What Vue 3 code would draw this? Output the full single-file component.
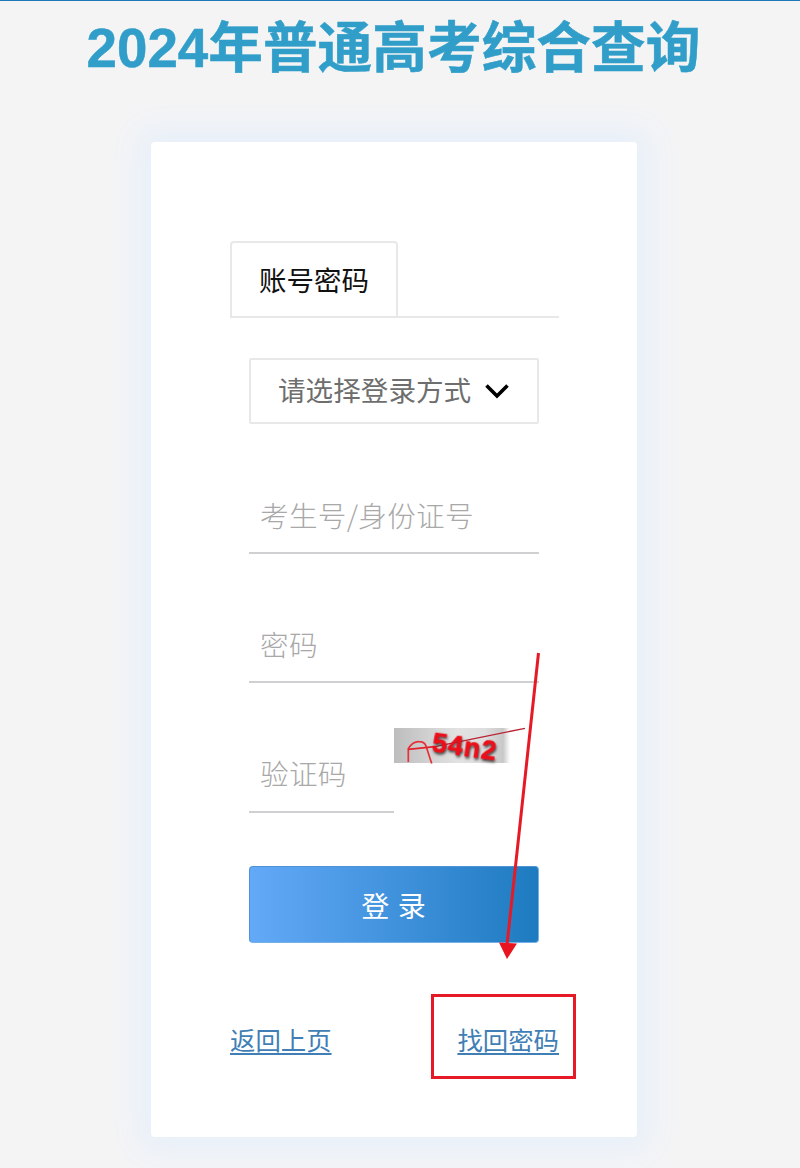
<script setup>
const fields = [
  { label: '考生号/身份证号', cls: 'first' },
  { label: '密码', cls: 'second' }
]
</script>

<template>
  <div class="page">
    <h1 class="title">2024年普通高考综合查询</h1>
    <main class="card">
      <div class="tabs"><div class="tab">账号密码</div></div>
      <div class="form">
        <div class="select">
          <span class="select-text">请选择登录方式</span>
          <svg class="chev" width="26" height="16" viewBox="0 0 26 16" aria-hidden="true">
            <path d="M2.5 2.5 L13 13 L23.5 2.5" fill="none" stroke="#000" stroke-width="3.6" />
          </svg>
        </div>
        <div v-for="f in fields" :key="f.label" class="field" :class="f.cls">{{ f.label }}</div>
        <div class="captcha-row">
          <div class="field code">验证码</div>
          <div class="captcha">
            <svg class="captcha-lines" width="132" height="36" viewBox="0 0 132 36" aria-hidden="true">
              <path d="M14.3 34 L14.3 20.5 C18 15 22 13.5 25 13.7 C29 13.8 31 15 32 18 L37.7 35.5" fill="none" stroke="#e6313a" stroke-width="1.7" />
              <path d="M14.3 21.3 L41 18.7" fill="none" stroke="#e3222b" stroke-width="1.7" />
              <path d="M41 18.7 L131 0.3" fill="none" stroke="#b92333" stroke-width="1.3" />
            </svg>
            <span class="captcha-text">54n2</span>
          </div>
        </div>
        <button class="login" type="button">登 录</button>
      </div>
      <div class="links">
        <a class="link">返回上页</a>
        <a class="link">找回密码</a>
      </div>
    </main>
    <div class="mark-box"></div>
    <svg class="mark-arrow" width="60" height="320" viewBox="0 0 60 320" aria-hidden="true">
      <path d="M43.5 1 L12 293" fill="none" stroke="#e51a26" stroke-width="3" />
      <path d="M4 290.5 L22 291.5 L12 307 Z" fill="#e8141f" />
    </svg>
  </div>
</template>

<style>
html, body { margin: 0; background: #f4f4f5; }
</style>

<style scoped>
.page {
  position: relative;
  width: 800px;
  height: 1168px;
  box-sizing: border-box;
  overflow: hidden;
  background: #f4f4f5;
  border-top: 1px solid #1d78b8;
  font-family: "Liberation Sans", "Noto Sans CJK SC", sans-serif;
}
.title {
  margin: 0;
  height: 141px;
  padding-top: 12px;
  padding-right: 13px;
  box-sizing: border-box;
  text-align: center;
  font-size: 54.7px;
  line-height: 70px;
  font-weight: 700;
  color: #319ec9;
  -webkit-text-stroke: 0.5px #319ec9;
}
.card {
  width: 486px;
  height: 995px;
  margin-left: 151px;
  box-sizing: border-box;
  padding: 99px 79px 0;
  background: #fff;
  border-radius: 4px;
  box-shadow: 0 0 30px 14px #e8f0fa;
}
.tabs {
  display: flex;
  width: 329px;
  height: 77px;
  box-sizing: border-box;
  border-bottom: 2px solid #e8e8e8;
}
.tab {
  width: 168px;
  height: 77px;
  box-sizing: border-box;
  border: 2px solid #e8e8e8;
  border-radius: 4px 4px 0 0;
  text-align: center;
  font-size: 27.5px;
  line-height: 78px;
  color: #111;
}
.form {
  width: 290px;
  margin-left: 19px;
}
.select {
  height: 66px;
  margin-top: 40px;
  box-sizing: border-box;
  display: flex;
  align-items: center;
  gap: 13px;
  padding-left: 27px;
  border: 2px solid #e8e8e8;
  border-radius: 2px;
  font-size: 27.6px;
  color: #6e6e6e;
}
.select-text { padding-bottom: 4px; }
.chev { flex: none; }
.field {
  box-sizing: border-box;
  padding-left: 11px;
  border-bottom: 2px solid #d0d0d2;
  font-size: 28.6px;
  letter-spacing: 0.3px;
  color: #a8a8a8;
  font-family: "Noto Sans CJK SC", sans-serif;
  font-weight: 300;
}
.field.first { height: 67px; margin-top: 63px; line-height: 56px; }
.field.second { height: 65px; margin-top: 64px; line-height: 52px; }
.captcha-row {
  display: flex;
  align-items: flex-start;
}
.field.code {
  width: 145px;
  height: 67px;
  margin-top: 63px;
  line-height: 54px;
}
.captcha {
  position: relative;
  width: 116px;
  height: 35px;
  margin-top: 45px;
  background: linear-gradient(90deg, #bdbdbd, #e2e2e2 55%, #dedede 78%, #c8c8c8 94%, #fff 100%);
}
.captcha-lines {
  position: absolute;
  left: 0;
  top: 0;
  overflow: visible;
}
.captcha-text {
  position: absolute;
  left: 38px;
  top: 4px;
  font-size: 27px;
  line-height: 30px;
  font-weight: 700;
  letter-spacing: 1px;
  color: #ec0f1a;
  -webkit-text-stroke: 0.6px #ec0f1a;
  text-shadow: 1px 2px 3px #333;
  transform: rotate(8deg);
  filter: blur(0.4px);
}
.login {
  display: block;
  width: 290px;
  height: 77px;
  margin-top: 53px;
  padding: 0;
  box-sizing: border-box;
  border: 1px solid #4f93d4;
  border-bottom-color: #74b0e8;
  border-right-color: #74b0e8;
  border-radius: 4px;
  background: linear-gradient(90deg, #63a9f8, #1e7bc0);
  color: #fff;
  font-family: "Noto Sans CJK SC", sans-serif;
  font-size: 28px;
  font-weight: 400;
  letter-spacing: 1px;
}
.links {
  display: flex;
  justify-content: space-between;
  width: 329px;
  margin-top: 79px;
  font-size: 25.4px;
  line-height: 38px;
}
.link {
  color: #3f7fb5;
  text-decoration: underline;
  text-decoration-thickness: 2px;
  text-underline-offset: 3px;
}
.mark-box {
  position: absolute;
  left: 431px;
  top: 993px;
  width: 145px;
  height: 85px;
  box-sizing: border-box;
  border: 3px solid #e51a26;
}
.mark-arrow {
  position: absolute;
  left: 495px;
  top: 651px;
}
</style>
